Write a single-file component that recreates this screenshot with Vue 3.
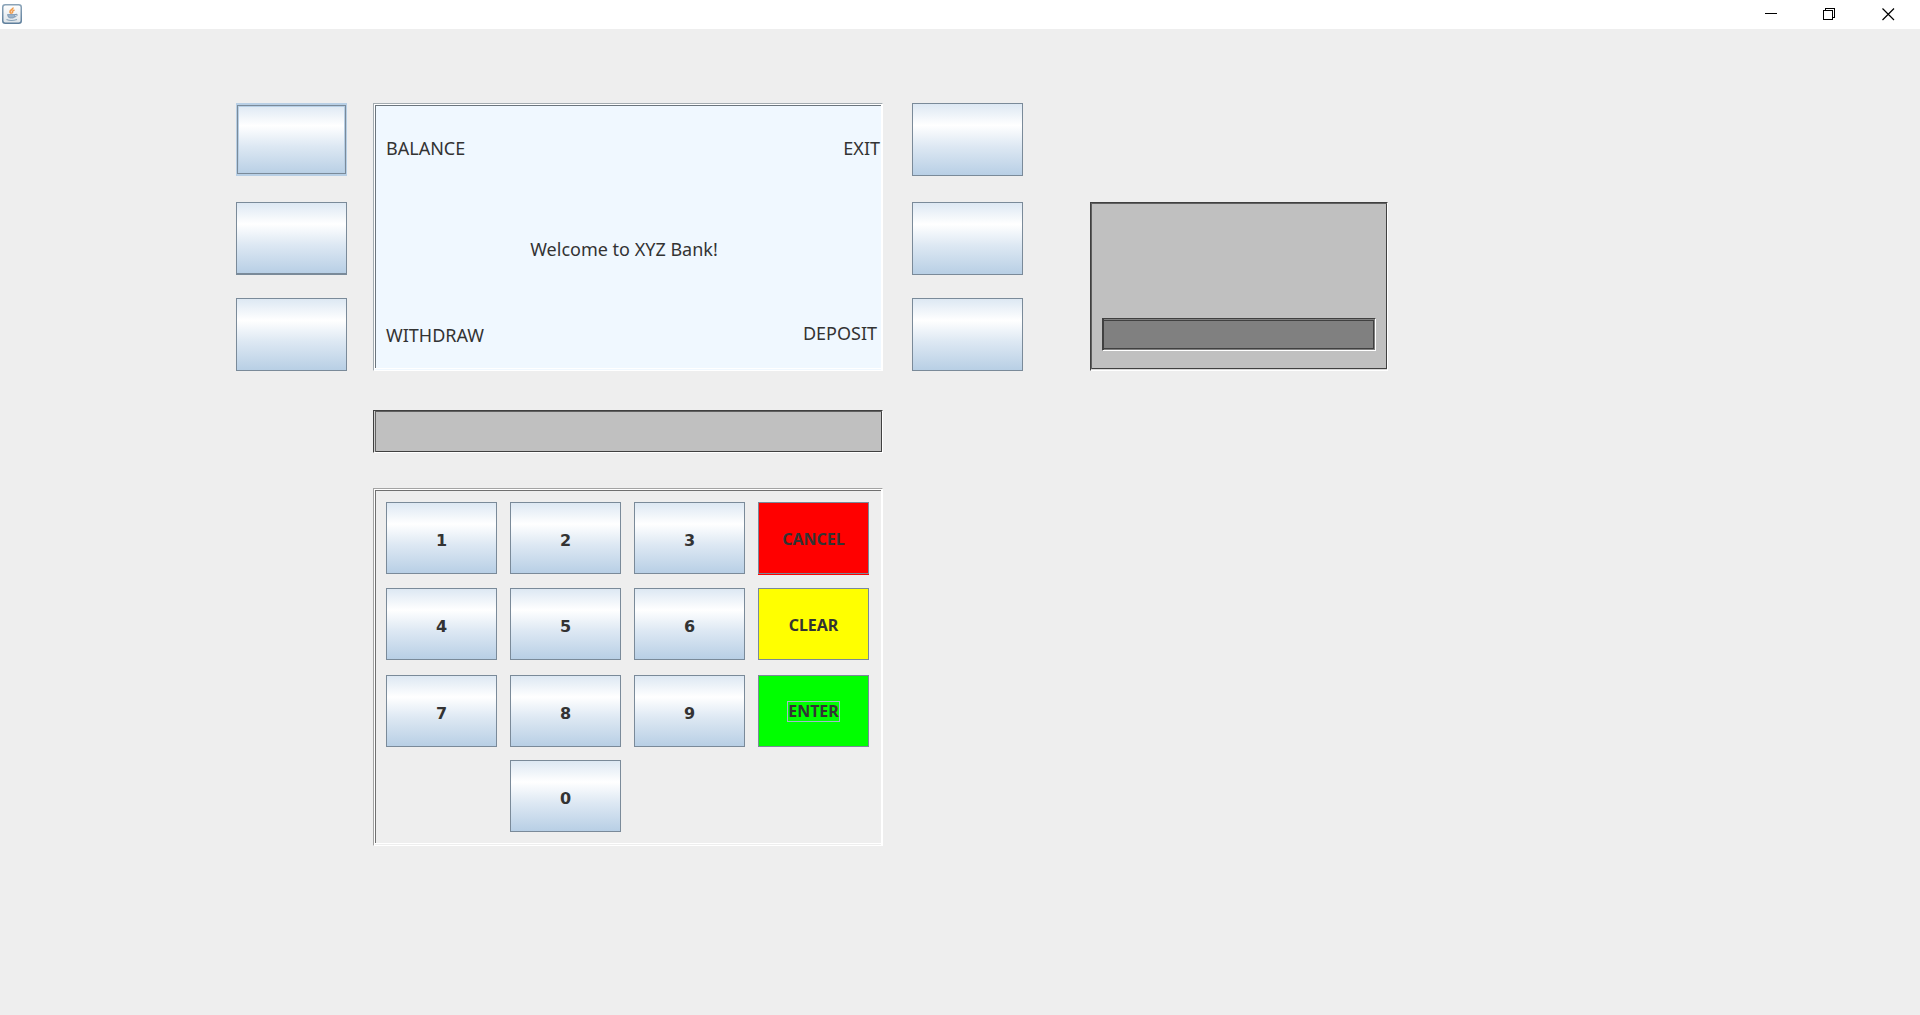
<script setup>
const leftButtons = [
  { id: 'balance', label: 'Balance', kind: 'focused' },
  { id: 'left-middle', label: 'Left middle', kind: 'heavy' },
  { id: 'withdraw', label: 'Withdraw', kind: '' },
]
const rightButtons = [
  { id: 'exit', label: 'Exit' },
  { id: 'right-middle', label: 'Right middle' },
  { id: 'deposit', label: 'Deposit' },
]
const keys = [
  { text: '1' }, { text: '2' }, { text: '3' }, { text: 'CANCEL', kind: 'cancel' },
  { text: '4' }, { text: '5' }, { text: '6' }, { text: 'CLEAR', kind: 'clear' },
  { text: '7' }, { text: '8' }, { text: '9' }, { text: 'ENTER', kind: 'enter' },
  { text: '0', kind: 'zero' },
]
</script>

<template>
  <div class="window">
    <header class="titlebar">
      <svg class="app-icon" width="20" height="20" viewBox="0 0 20 20" aria-hidden="true">
        <defs>
          <linearGradient id="tile" x1="0" y1="0" x2="0" y2="1">
            <stop offset="0" stop-color="#ffffff" />
            <stop offset="1" stop-color="#dde3e8" />
          </linearGradient>
          <linearGradient id="rim" x1="0" y1="0" x2="0" y2="1">
            <stop offset="0" stop-color="#8aa3b8" />
            <stop offset="1" stop-color="#5f7f9c" />
          </linearGradient>
        </defs>
        <rect x=".75" y=".75" width="18.500" height="18.500" rx="2.500" fill="url(#tile)" stroke="url(#rim)" stroke-width="1.500" />
        <path d="M11 3.500C11.500 5.500 7.500 6 8 8C8.200 9 9.500 9 9 10M12.500 6C10 7 10 8 10.800 9.200" fill="none" stroke="#f09a4a" stroke-width="1.600" />
        <path d="M5.500 10.500Q6 14 8 14H11Q13 14 13 10.500Z" fill="#9bb2c8" stroke="#7c97b2" stroke-width=".8" />
        <path d="M13 10.500Q16 9.500 15 11.500Q14 13 12.500 13" fill="none" stroke="#7c97b2" />
        <path d="M4.500 15.500Q9 17.500 15 15.500" fill="none" stroke="#8aa3b8" stroke-width="1.200" />
      </svg>
      <nav class="controls">
        <button type="button" aria-label="Minimize">
          <svg width="13" height="13" viewBox="0 0 13 13" shape-rendering="crispEdges"><path d="M1 5.500H13" stroke="#000" /></svg>
        </button>
        <button type="button" aria-label="Restore">
          <svg width="13" height="13" viewBox="0 0 13 13" shape-rendering="crispEdges" fill="none" stroke="#000">
            <rect x=".5" y="2.500" width="9" height="9" />
            <path d="M2.500 2V.5H11.500V9.500H10" />
          </svg>
        </button>
        <button type="button" aria-label="Close">
          <svg width="13" height="13" viewBox="0 0 13 13"><path d="M.5 .5L12 12M12 .5L.5 12" stroke="#000" stroke-width="1.200" /></svg>
        </button>
      </nav>
    </header>

    <main class="atm">
      <div class="side left">
        <button v-for="b in leftButtons" :key="b.id" type="button" class="metal" :class="b.kind" :aria-label="b.label"></button>
      </div>

      <section class="screen">
        <div class="line top"><span>BALANCE</span><span>EXIT</span></div>
        <p class="welcome">Welcome to XYZ Bank!</p>
        <div class="line bottom"><span>WITHDRAW</span><span class="deposit">DEPOSIT</span></div>
      </section>

      <div class="side right">
        <button v-for="b in rightButtons" :key="b.id" type="button" class="metal" :aria-label="b.label"></button>
      </div>

      <section class="card-reader">
        <div class="slot"></div>
      </section>

      <div class="dispenser"></div>

      <section class="keypad">
        <button v-for="k in keys" :key="k.text" type="button" class="metal key" :class="k.kind">
          <span>{{ k.text }}</span>
        </button>
      </section>
    </main>
  </div>
</template>

<style>
body {
  margin: 0;
  background: #eeeeee;
}
</style>

<style scoped>
.window {
  min-height: 100vh;
  background: #eeeeee;
  color: #333333;
  font-family: "Noto Sans", sans-serif;
}
.titlebar {
  display: flex;
  justify-content: space-between;
  box-sizing: border-box;
  height: 29px;
  padding: 4px 2px 0;
  background: #ffffff;
}
.app-icon {
  display: block;
}
.controls {
  display: flex;
}
.controls button {
  display: flex;
  justify-content: center;
  width: 59px;
  height: 24px;
  padding: 4px 0 0;
  border: 0;
  background: none;
}
.atm {
  display: grid;
  grid-template-columns: 236fr 111fr 26fr 510fr 29fr 111fr 67fr 298fr 532fr;
  grid-template-rows: 268px 82px 432px;
  padding-top: 74px;
}
.side {
  display: grid;
  grid-template-rows: 99px 96px 73px;
}
.left {
  grid-column: 2;
}
.right {
  grid-column: 6;
}
.metal {
  box-sizing: border-box;
  width: 100%;
  height: 73px;
  padding: 0;
  border: 1px solid #7a8a99;
  border-radius: 0;
  background: linear-gradient(#dde8f3, #ffffff 30%, #dde8f3 60%, #b8cfe5);
  color: inherit;
}
.focused {
  border-width: 2px 1px;
  border-color: #b8cfe5;
  box-shadow: inset 0 0 0 1px #7a8a99, inset 0 0 0 2px #b8cfe5;
}
.heavy {
  border-bottom-width: 2px;
}
.screen {
  grid-column: 4;
  display: flex;
  flex-direction: column;
  justify-content: space-between;
  box-sizing: border-box;
  padding: 31px 2px 23px 12px;
  border: 1px solid;
  border-color: #a3abb0 #ffffff #ffffff #a3abb0;
  background: #f0f8ff;
  box-shadow:
    inset 1px 1px 0 #ffffff,
    inset -1px 0 0 #ffffff,
    inset 0 -1px 0 #f0f8ff,
    inset 0 -2px 0 #ffffff,
    inset 2px 2px 0 #6b757d;
  font-size: 18px;
  line-height: 26px;
}
.line {
  display: flex;
  justify-content: space-between;
}
.welcome {
  margin: 16px 18px 0 0;
  text-align: center;
}
.deposit {
  padding: 0 3px 2px 0;
}
.bottom {
  align-items: flex-end;
}
.bottom span {
  line-height: 24px;
}
.card-reader {
  grid-column: 8;
  align-self: end;
  box-sizing: border-box;
  height: 169px;
  padding: 115px 11px 0;
  border: 1px solid;
  border-color: #404040 #ffffff #ffffff #404040;
  background: #c0c0c0;
  box-shadow:
    inset 0 -1px 0 #d8d8d8,
    inset 1px 1px 0 #606060,
    inset -1px -2px 0 #404040;
}
.slot {
  box-sizing: border-box;
  height: 33px;
  border: 1px solid;
  border-color: #404040 #ffffff #ffffff #404040;
  background: #808080;
  box-shadow:
    inset 1px 0 0 #404040,
    inset 0 1px 0 #808080,
    inset -1px -1px 0 #808080,
    inset -2px -2px 0 #404040,
    inset 0 2px 0 #404040;
}
.dispenser {
  grid-column: 4;
  box-sizing: border-box;
  height: 43px;
  margin-top: 39px;
  border: 1px solid;
  border-color: #404040 #ffffff #ffffff #404040;
  background: #c0c0c0;
  box-shadow:
    inset 1px 0 0 #d0d0d0,
    inset 2px 1px 0 #606060,
    inset -1px -1px 0 #404040;
}
.keypad {
  grid-column: 4;
  display: grid;
  grid-template-columns: repeat(4, 1fr);
  grid-template-rows: 86px 87px 85px 72px;
  column-gap: 13px;
  box-sizing: border-box;
  height: 358px;
  margin-top: 35px;
  padding: 13px 13px 0 12px;
  border: 1px solid;
  border-color: #a3a3a3 #ffffff #ffffff #a3a3a3;
  box-shadow:
    inset 1px 1px 0 #ffffff,
    inset -1px 0 0 #ffffff,
    inset 0 -1px 0 #eeeeee,
    inset 0 -2px 0 #ffffff,
    inset 2px 2px 0 #707070;
}
.key {
  height: 72px;
  padding-top: 5px;
  font: bold 16px/20px "DejaVu Sans", sans-serif;
}
.cancel,
.clear,
.enter {
  padding-top: 2px;
  font-family: "Noto Sans", sans-serif;
}
.cancel {
  background: #ff0000;
  box-shadow: 0 1px 0 #ff0000;
}
.clear {
  background: #ffff00;
}
.enter {
  padding-top: 0;
  background: #00ff00;
}
.enter span {
  display: inline-block;
  border: 1px solid #a3b8cc;
  line-height: 19px;
}
.zero {
  grid-column: 2;
}
</style>
